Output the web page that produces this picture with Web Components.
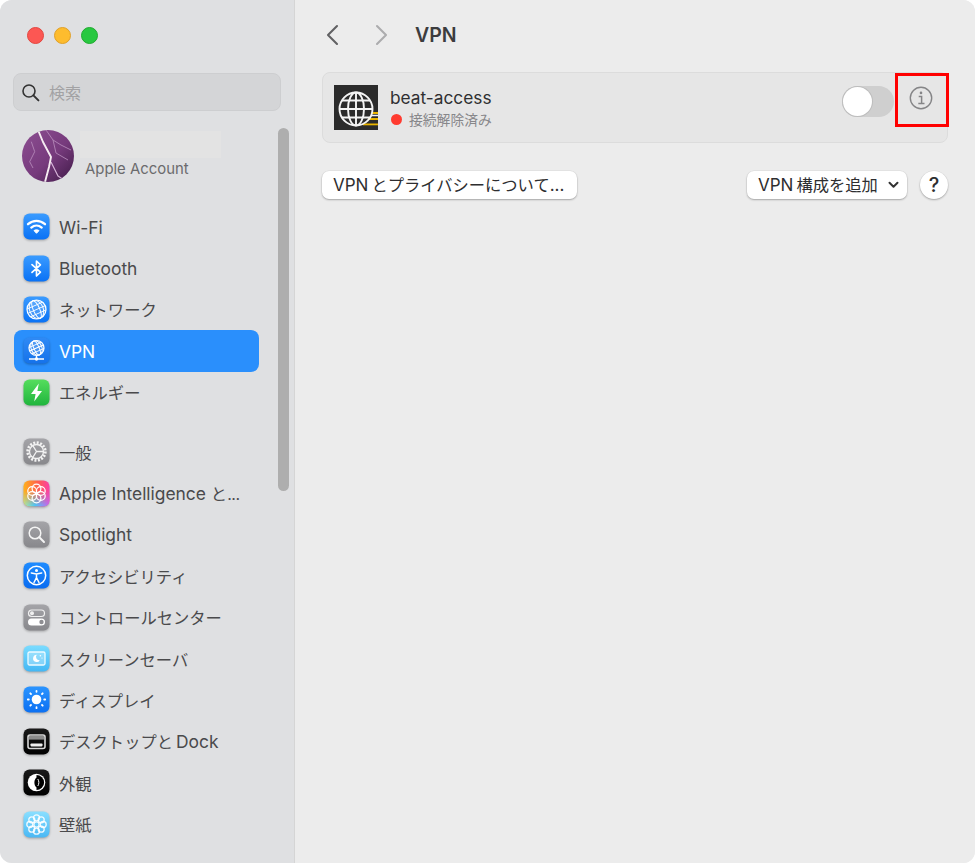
<!DOCTYPE html>
<html lang="ja">
<head>
<meta charset="utf-8">
<title>VPN</title>
<style>
html,body{margin:0;padding:0;background:#fff;}
body{font-family:"Inter","Noto Sans CJK JP",sans-serif;}
</style>
</head>
<body>
<settings-window>
  <settings-sidebar slot="sidebar">
    <side-item icon="wifi" label="Wi-Fi"></side-item>
    <side-item icon="bluetooth" label="Bluetooth"></side-item>
    <side-item icon="network" label="ネットワーク"></side-item>
    <side-item icon="vpn" label="VPN" selected></side-item>
    <side-item icon="energy" label="エネルギー" class="group-end"></side-item>
    <side-item icon="general" label="一般"></side-item>
    <side-item icon="ai" label="Apple Intelligence と..."></side-item>
    <side-item icon="spotlight" label="Spotlight"></side-item>
    <side-item icon="access" label="アクセシビリティ"></side-item>
    <side-item icon="control" label="コントロールセンター"></side-item>
    <side-item icon="saver" label="スクリーンセーバ"></side-item>
    <side-item icon="display" label="ディスプレイ"></side-item>
    <side-item icon="dock" label="デスクトップとDock"></side-item>
    <side-item icon="appearance" label="外観"></side-item>
    <side-item icon="wallpaper" label="壁紙"></side-item>
  </settings-sidebar>
  <vpn-pane slot="main"></vpn-pane>
</settings-window>
<script>
function tpl(html){const t=document.createElement('template');t.innerHTML=html;return t;}
const FONT='"Inter","Noto Sans CJK JP",sans-serif';
/* Latin runs are set a little larger than kana and kanji, as in the system font */
function runs(s){
  let first=true;
  return s.split(/([A-Za-z][A-Za-z\- ]*|\.\.\.)/).filter(Boolean).map(r=>{
    const cls=r==='...'?'d':/^[A-Za-z]/.test(r)?(first?'l':'l gap'):'c';
    first=false;
    return `<span class="${cls}">${r}</span>`;
  }).join('');
}

customElements.define('settings-window',class extends HTMLElement{
  constructor(){super();this.attachShadow({mode:'open'}).appendChild(tpl(`
  <style>
  :host{display:block;width:975px;height:863px;overflow:hidden;font-family:${FONT};}
  .win{display:grid;grid-template-columns:295px 1fr;width:975px;height:863px;border-radius:12px;overflow:hidden;background:#ececec;}
  </style>
  <div class="win"><slot name="sidebar"></slot><slot name="main"></slot></div>`).content.cloneNode(true));}
});

customElements.define('settings-sidebar',class extends HTMLElement{
  constructor(){super();this.attachShadow({mode:'open'}).appendChild(tpl(`
  <style>
  :host{display:block;position:relative;height:863px;background:#dfe0e2;border-right:1px solid #d5d5d5;box-sizing:border-box;overflow:hidden;}
  .lights{display:flex;gap:10px;padding:27px 0 0 27px;height:19px;}
  .lights i{display:block;width:17px;height:17px;border-radius:50%;box-sizing:border-box;}
  .r{background:#fc5753;border:1px solid #e2463f;}
  .y{background:#fdbc2e;border:1px solid #e0a028;}
  .g{background:#28c840;border:1px solid #1fab2f;}
  .search{margin:27px 0 0 13px;width:268px;height:38px;box-sizing:border-box;border:1px solid #cdced0;background:#d4d5d7;border-radius:8px;display:flex;align-items:center;gap:9px;padding-left:7px;color:#a2a2a4;font-size:16px;}
  .search svg{width:19px;height:19px;flex:none;}
  .profile{display:grid;grid-template-columns:52px auto;column-gap:6px;margin:19px 0 0 22px;height:52px;}
  .profile svg{width:52px;height:52px;display:block;}
  .who{display:flex;flex-direction:column;}
  .redact{display:block;width:141px;height:27px;margin-top:1px;background:#e3e3e3;}
  .acct{margin:1px 0 0 5px;font-size:14.9px;line-height:20px;color:#6b6b6d;}
  .list{margin-top:24px;display:flex;flex-direction:column;}
  .thumb{position:absolute;left:278px;top:128px;width:11px;height:363px;border-radius:6px;background:#aeaeae;}
  </style>
  <div class="lights"><i class="r"></i><i class="y"></i><i class="g"></i></div>
  <div class="search">
    <svg viewBox="0 0 19 19" fill="none" stroke="#333" stroke-width="1.6"><circle cx="8" cy="8" r="6"/><path d="M12.4 12.4L17.4 17.4" stroke-width="2" stroke-linecap="round"/></svg>
    <span>検索</span>
  </div>
  <div class="profile">
    <svg viewBox="0 0 52 52">
      <defs><linearGradient id="av" x1="0" y1="0" x2="1" y2="1"><stop offset="0" stop-color="#8d4f92"/><stop offset=".55" stop-color="#763a7c"/><stop offset="1" stop-color="#3f1a47"/></linearGradient>
      <clipPath id="avc"><circle cx="26" cy="26" r="26"/></clipPath></defs>
      <circle cx="26" cy="26" r="26" fill="url(#av)"/>
      <g clip-path="url(#avc)" fill="none" stroke-linejoin="round">
        <path d="M24 0L31 10L39 15L49 20M31 10L34 23L46 30" stroke="#b387b8" stroke-width=".9"/>
        <path d="M9.3 11.7L12.7 21.7L7.7 31.7L11 38" stroke="#b387b8" stroke-width=".9"/>
        <path d="M29 32L36 46L42 50" stroke="#d6b2d8" stroke-width="1.2"/>
        <path d="M16 0L21 12L29 27L27 37L23 52" stroke="#f5ebf1" stroke-width="1.9"/>
      </g>
    </svg>
    <div class="who"><span class="redact"></span><span class="acct">Apple Account</span></div>
  </div>
  <div class="list"><slot></slot></div>
  <div class="thumb"></div>`).content.cloneNode(true));}
});

function box(id,c1,c2,inner){
  return `<svg viewBox="0 0 27 27" width="27" height="27"><defs><linearGradient id="${id}" x1="0" y1="0" x2="0" y2="1"><stop offset="0" stop-color="${c1}"/><stop offset="1" stop-color="${c2}"/></linearGradient></defs><rect x=".5" y=".5" width="26" height="26" rx="6" fill="url(#${id})"/>${inner}</svg>`;
}
/* tilted mesh globe of the network icons */
const globe=(cx,cy,r)=>`<g fill="#fff" fill-opacity=".18" stroke="#fff" stroke-width=".95"><circle cx="${cx}" cy="${cy}" r="${r}" stroke-width="1.2"/><g fill="none" transform="rotate(-24 ${cx} ${cy})"><ellipse cx="${cx}" cy="${cy}" rx="${r*.34}" ry="${r}"/><ellipse cx="${cx}" cy="${cy}" rx="${r*.72}" ry="${r}"/><path d="M${cx-r} ${cy}H${cx+r}M${cx-r*.9} ${cy-r*.45}H${cx+r*.9}M${cx-r*.9} ${cy+r*.45}H${cx+r*.9}"/></g></g>`;
const GREY=['#a4a4a8','#88888c'];
const ICONS={
 wifi:box('i1','#3a9bff','#0a72f5',`<g fill="none" stroke="#fff" stroke-linecap="round"><path d="M5 11.2C10 6.8 17 6.8 22 11.2" stroke-width="2.3"/><path d="M8.3 14.6C11.4 12 15.6 12 18.7 14.6" stroke-width="2.3"/></g><path d="M11 17.6C12.5 16.5 14.5 16.5 16 17.6L13.5 20.3Z" fill="#fff" stroke="#fff" stroke-linejoin="round"/>`),
 bluetooth:box('i2','#3a9bff','#0a72f5',`<path d="M9 9.6L17.4 17.2L13.5 21V6L17.4 9.8L9 17.4" fill="none" stroke="#fff" stroke-width="1.7" stroke-linejoin="round" stroke-linecap="round"/>`),
 network:box('i3','#3a9bff','#0a72f5',globe(13.5,13.5,9.5)),
 vpn:box('i4','#2f8af5','#1572ea',globe(13.5,11,7.5)+`<path d="M13.5 18.5V22M6 22H21" stroke="#fff" stroke-width="1.4"/><circle cx="13.5" cy="22" r="1.7" fill="#fff"/>`),
 energy:box('i5','#55dd5d','#20b53d',`<path d="M15.8 4.5L8 15H12.6L11.2 22.5L19 12H14.4Z" fill="#fff"/>`),
 general:box('i6',GREY[0],GREY[1],`<circle cx="13.5" cy="13.5" r="7" fill="none" stroke="#f2f2f2" stroke-width="1.3"/><circle cx="13.5" cy="13.5" r="8.8" fill="none" stroke="#f2f2f2" stroke-width="2.8" stroke-dasharray="2 1.45"/><path d="M13.5 13.5L9.8 7.6M13.5 13.5L9.8 19.4M13.5 13.5H20.5" stroke="#f2f2f2" stroke-width="1.3"/>`),
 ai:`<svg viewBox="0 0 27 27" width="27" height="27"><defs><linearGradient id="a1" x1="0" y1="0" x2="1" y2="0"><stop offset="0" stop-color="#ffb21a"/><stop offset=".55" stop-color="#ff5f4e"/><stop offset="1" stop-color="#fb3fa8"/></linearGradient><linearGradient id="a2" x1="0" y1="0" x2="1" y2="0"><stop offset="0" stop-color="#b6e59a"/><stop offset=".45" stop-color="#49c6fb"/><stop offset="1" stop-color="#c765ef"/></linearGradient><linearGradient id="a3" x1="0" y1="0" x2="0" y2="1"><stop offset=".4" stop-color="#000"/><stop offset=".95" stop-color="#fff"/></linearGradient><mask id="am"><rect width="27" height="27" fill="url(#a3)"/></mask></defs><rect x=".5" y=".5" width="26" height="26" rx="6" fill="url(#a1)"/><rect x=".5" y=".5" width="26" height="26" rx="6" fill="url(#a2)" mask="url(#am)"/><g fill="none" stroke="#fff" stroke-width="1.25"><circle cx="13.5" cy="8.6" r="4.4"/><circle cx="13.5" cy="18.4" r="4.4"/><circle cx="9.2" cy="11" r="4.4"/><circle cx="17.8" cy="11" r="4.4"/><circle cx="9.2" cy="16" r="4.4"/><circle cx="17.8" cy="16" r="4.4"/></g></svg>`,
 spotlight:box('i7',GREY[0],GREY[1],`<circle cx="12" cy="12" r="5.8" fill="none" stroke="#f4f4f4" stroke-width="1.5"/><path d="M16.3 16.3L21 21" stroke="#f4f4f4" stroke-width="2" stroke-linecap="round"/>`),
 access:box('i8','#1f8cff','#0a6cf0',`<circle cx="13.5" cy="13.5" r="9.2" fill="none" stroke="#fff" stroke-width="1.5"/><circle cx="13.5" cy="8.4" r="1.5" fill="#fff"/><path d="M8.3 11L13.5 12L18.7 11M13.5 12V15.5L11 20.5M13.5 15.5L16 20.5" fill="none" stroke="#fff" stroke-width="1.5" stroke-linecap="round"/>`),
 control:box('i9',GREY[0],GREY[1],`<rect x="5.5" y="6" width="16" height="6.5" rx="3.25" fill="none" stroke="#f0f0f0" stroke-width="1.2"/><circle cx="9" cy="9.25" r="2" fill="#f0f0f0"/><rect x="5" y="14.5" width="17" height="7" rx="3.5" fill="#fff"/><circle cx="18.5" cy="18" r="2.2" fill="#8e8e92"/>`),
 saver:box('i10','#7bdcff','#43b7f4',`<rect x="5" y="7" width="17" height="13" rx="1.5" fill="#fff" fill-opacity=".28" stroke="#eefaff" stroke-width="1.3"/><path d="M13.8 9.8A3.6 3.6 0 1 0 16.8 15.2A3.3 3.3 0 0 1 13.8 9.8Z" fill="#fff"/><circle cx="17.4" cy="10.8" r=".8" fill="#fff"/><circle cx="19" cy="13" r=".6" fill="#fff"/>`),
 display:box('i11','#2a94ff','#0c70f2',`<circle cx="13.5" cy="13.5" r="4.8" fill="#fff"/><g stroke="#fff" stroke-width="1.8" stroke-linecap="round"><path d="M13.5 4.8V5.8M13.5 21.2V22.2M4.8 13.5H5.8M21.2 13.5H22.2M7.3 7.3L8 8M19 19L19.7 19.7M7.3 19.7L8 19M19 8L19.7 7.3"/></g>`),
 dock:box('i12','#1a1a1a','#000',`<rect x="5" y="7" width="17" height="13.5" rx="2" fill="none" stroke="#d8d8d8" stroke-width="1.6"/><rect x="6" y="8" width="15" height="3.6" fill="#8c8c8c"/><rect x="7.5" y="15.4" width="12" height="3" rx=".8" fill="#f0f0f0"/>`),
 appearance:box('i13','#1a1a1a','#000',`<circle cx="13.5" cy="13.5" r="8.8" fill="#fff"/><path d="M13.5 5.9A7.6 7.6 0 0 1 13.5 21.1Z" fill="#000"/><path d="M13.5 8.5C10.7 10.5 10.7 16.5 13.5 18.5C16.3 16.5 16.3 10.5 13.5 8.5Z" fill="#000"/><path d="M14.8 10C16.2 12 16.2 15 14.8 17" fill="none" stroke="#fff" stroke-width="1"/>`),
 wallpaper:box('i14','#8adfff','#4ab8f4',`<g fill="none" stroke="#fff" stroke-opacity=".9" stroke-width="1.3"><circle cx="13.5" cy="13.5" r="2.6"/><circle cx="13.5" cy="6.8" r="3"/><circle cx="13.5" cy="20.2" r="3"/><circle cx="6.8" cy="13.5" r="3"/><circle cx="20.2" cy="13.5" r="3"/><circle cx="8.8" cy="8.8" r="3"/><circle cx="18.2" cy="8.8" r="3"/><circle cx="8.8" cy="18.2" r="3"/><circle cx="18.2" cy="18.2" r="3"/></g>`)
};

customElements.define('side-item',class extends HTMLElement{
  connectedCallback(){
    if(this.shadowRoot)return;
    this.attachShadow({mode:'open'}).appendChild(tpl(`
    <style>
    :host{display:block;height:41.4px;margin-left:14px;width:245px;}
    :host(.group-end){margin-bottom:18px;}
    .row{height:41.4px;box-sizing:border-box;display:flex;align-items:center;gap:9px;padding-left:9px;border-radius:8px;color:#4a4a4c;white-space:pre;line-height:20px;}
    :host([selected]) .row{background:#2a8ffc;color:#fff;}
    .ic{width:27px;height:27px;flex:none;filter:drop-shadow(0 1px 1px rgba(0,0,0,.28));}
    .t{margin-top:2px;}
    svg{display:block;}
    .l{font-size:17.4px;}
    .c{font-size:16.3px;}
    .d{font-size:16px;letter-spacing:-.4px;}
    .gap{margin-left:3px;}
    </style>
    <div class="row"><span class="ic">${ICONS[this.getAttribute('icon')]||''}</span><span class="t">${runs(this.getAttribute('label'))}</span></div>`).content.cloneNode(true));
  }
});

customElements.define('vpn-pane',class extends HTMLElement{
  constructor(){super();this.attachShadow({mode:'open'}).appendChild(tpl(`
  <style>
  :host{display:block;position:relative;height:863px;background:#ececec;color:#2e2e30;}
  header{display:flex;align-items:center;height:70px;padding-left:30px;box-sizing:border-box;}
  header svg{display:block;flex:none;}
  .fwd{margin-left:36px;}
  h1{margin:0 0 0 26px;font-size:19.5px;font-weight:600;color:#3c3c3e;}
  .card{margin:2px 0 0 27px;width:626px;height:71px;box-sizing:border-box;border:1px solid #dcdcdc;border-radius:8px;background:#e6e6e6;display:flex;align-items:center;padding-left:11px;}
  .app{width:44px;height:45px;flex:none;display:block;}
  .txt{margin-left:12px;flex:1;display:flex;flex-direction:column;}
  .name{font-size:17.3px;line-height:24px;color:#2f2f31;}
  .st{display:flex;align-items:center;gap:7px;font-size:13.8px;line-height:20px;color:#87878a;}
  .dot{width:11px;height:11px;border-radius:50%;background:#ff3b30;margin-left:1px;}
  .tog{width:52px;height:31px;margin-bottom:12px;border-radius:16px;background:#cfcfcf;flex:none;display:flex;align-items:center;}
  .knob{width:29px;height:29px;border-radius:50%;background:#fff;box-shadow:0 0 0 1px #bdbdbd;margin-left:1px;}
  .info{margin:0 14px 19px 15px;flex:none;display:block;}
  .acts{display:flex;align-items:center;margin:28px 0 0 27px;width:640px;}
  .btn{height:28px;box-sizing:border-box;background:#fff;border-radius:7px;box-shadow:0 1px 2px rgba(0,0,0,.28),0 0 0 .5px rgba(0,0,0,.06);color:#2e2e30;display:flex;align-items:center;white-space:pre;line-height:20px;}
  .l{font-size:17px;}
  .c{font-size:16.3px;}
  .vg{margin-left:3px;}
  .about{width:255px;padding-left:11px;}
  .add{width:160px;margin-left:170px;padding-left:11px;}
  .add svg{display:block;flex:none;margin-left:10px;}
  .help{width:28px;height:28px;margin-left:13px;border-radius:50%;justify-content:center;font-weight:500;font-size:20px;}
  .mark{position:absolute;left:600px;top:73px;width:54px;height:54px;box-sizing:border-box;border:3px solid #f00;}
  </style>
  <header>
    <svg width="14" height="22" viewBox="0 0 14 22" fill="none" stroke="#616163" stroke-width="2.1" stroke-linecap="round" stroke-linejoin="round"><path d="M12 2L3 11L12 20"/></svg>
    <svg class="fwd" width="14" height="22" viewBox="0 0 14 22" fill="none" stroke="#acacae" stroke-width="2.1" stroke-linecap="round" stroke-linejoin="round"><path d="M2 2L11 11L2 20"/></svg>
    <h1>VPN</h1>
  </header>
  <div class="card">
    <svg class="app" viewBox="0 0 44 45">
      <rect width="44" height="45" fill="#2b2b2b"/>
      <g fill="#e9b400"><rect x="38" y="27" width="6" height="2"/><rect x="34" y="33" width="10" height="2"/><rect x="29" y="38.5" width="15" height="1.8"/></g>
      <path d="M38 30.5H44" stroke="#f4f4f4" stroke-width="1.5"/>
      <g fill="none" stroke="#f4f4f4" stroke-width="1.9"><circle cx="22" cy="24" r="16.5"/><ellipse cx="22" cy="24" rx="8" ry="16.5"/><path d="M22 7.5V40.5M5.500 24H38.500M8 15.500H36M8 32.500H36"/></g>
    </svg>
    <div class="txt">
      <span class="name">beat-access</span>
      <span class="st"><i class="dot"></i>接続解除済み</span>
    </div>
    <div class="tog"><div class="knob"></div></div>
    <svg class="info" width="24" height="24" viewBox="0 0 24 24" fill="none" stroke="#858587"><circle cx="12" cy="12" r="10.7" stroke-width="1.4"/><circle cx="12" cy="6.9" r="1.3" fill="#858587" stroke="none"/><path d="M9.7 10.5H12.6V17.3M9.3 17.5H15.5" stroke-width="1.5"/></svg>
  </div>
  <div class="acts">
    <div class="btn about"><span class="l">VPN</span><span class="c vg">とプライバシーについて</span><span class="l">...</span></div>
    <div class="btn add"><span class="l">VPN</span><span class="c vg">構成を追加</span><svg width="11" height="8" viewBox="0 0 11 8" fill="none" stroke="#333" stroke-width="2" stroke-linecap="round" stroke-linejoin="round"><path d="M1.5 1.8L5.5 5.8L9.5 1.8"/></svg></div>
    <div class="btn help">?</div>
  </div>
  <div class="mark"></div>`).content.cloneNode(true));}
});
</script>
</body>
</html>
